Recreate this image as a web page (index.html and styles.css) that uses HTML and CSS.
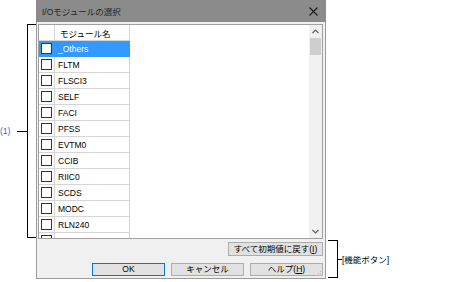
FILE: index.html
```html
<!DOCTYPE html>
<html lang="ja">
  <head>
    <meta charset="UTF-8" />
    <title>I/Oモジュールの選択</title>
    <link rel="stylesheet" href="styles.css">
  </head>
  <body>
    <div class="stage">
      <!-- annotation (1) -->
      <div class="note-left">
        <div class="tag"><span class="tag-text">(1)</span><span class="tag-line"></span></div>
        <div class="brace-left"></div>
      </div>

      <div class="dialog">
        <div class="titlebar">
          <span class="title">I/Oモジュールの選択</span>
          <svg class="close" width="9" height="9" viewBox="0 0 9 9"><path d="M0.5 0.5L8.5 8.5M8.5 0.5L0.5 8.5" stroke="#1a1a1a" stroke-width="1.1" fill="none"/></svg>
        </div>
        <div class="body">
          <div class="listbox">
            <div class="grid">
              <div class="row head"><span class="chk"></span><span class="name">モジュール名</span></div>
              <div class="row selected"><span class="chk"><i class="box"></i></span><span class="name">_Others</span></div>
              <div class="row"><span class="chk"><i class="box"></i></span><span class="name">FLTM</span></div>
              <div class="row"><span class="chk"><i class="box"></i></span><span class="name">FLSCI3</span></div>
              <div class="row"><span class="chk"><i class="box"></i></span><span class="name">SELF</span></div>
              <div class="row"><span class="chk"><i class="box"></i></span><span class="name">FACI</span></div>
              <div class="row"><span class="chk"><i class="box"></i></span><span class="name">PFSS</span></div>
              <div class="row"><span class="chk"><i class="box"></i></span><span class="name">EVTM0</span></div>
              <div class="row"><span class="chk"><i class="box"></i></span><span class="name">CCIB</span></div>
              <div class="row"><span class="chk"><i class="box"></i></span><span class="name">RIIC0</span></div>
              <div class="row"><span class="chk"><i class="box"></i></span><span class="name">SCDS</span></div>
              <div class="row"><span class="chk"><i class="box"></i></span><span class="name">MODC</span></div>
              <div class="row"><span class="chk"><i class="box"></i></span><span class="name">RLN240</span></div>
              <div class="row"><span class="chk"><i class="box"></i></span><span class="name">RLN2400</span></div>
            </div>
            <div class="scrollbar">
              <svg class="arrow" width="13" height="13" viewBox="0 0 13 13"><path d="M3.5 8L6.5 5L9.5 8" stroke="#606060" stroke-width="1.2" fill="none"/></svg>
              <div class="thumb"></div>
              <div class="track"></div>
              <svg class="arrow" width="13" height="13" viewBox="0 0 13 13"><path d="M3.5 5L6.5 8L9.5 5" stroke="#606060" stroke-width="1.2" fill="none"/></svg>
            </div>
          </div>
          <div class="reset-row">
            <button class="btn wide">すべて初期値に戻す(<u>I</u>)</button>
          </div>
          <div class="btn-row">
            <button class="btn default">OK</button>
            <button class="btn">キャンセル</button>
            <button class="btn">ヘルプ(<u>H</u>)</button>
          </div>
          <svg class="grip" width="8" height="8" viewBox="0 0 8 8">
            <rect x="6" y="0" width="1" height="1" fill="#b8b8b8"/>
            <rect x="4" y="2" width="1" height="1" fill="#b8b8b8"/>
            <rect x="6" y="2" width="1" height="1" fill="#b8b8b8"/>
            <rect x="2" y="4" width="1" height="1" fill="#b8b8b8"/>
            <rect x="4" y="4" width="1" height="1" fill="#b8b8b8"/>
            <rect x="6" y="4" width="1" height="1" fill="#b8b8b8"/>
            <rect x="0" y="6" width="1" height="1" fill="#b8b8b8"/>
            <rect x="2" y="6" width="1" height="1" fill="#b8b8b8"/>
            <rect x="4" y="6" width="1" height="1" fill="#b8b8b8"/>
            <rect x="6" y="6" width="1" height="1" fill="#b8b8b8"/>
          </svg>
        </div>
      </div>

      <!-- annotation for function buttons -->
      <div class="note-right">
        <div class="brace-right"></div>
        <div class="tag-line short"></div>
        <span class="note-text">[機能ボタン]</span>
      </div>
    </div>
  </body>
</html>
```

FILE: styles.css
```css
html, body {
  margin: 0;
  padding: 0;
  background: #fff;
}
body {
  width: 474px;
  height: 282px;
  overflow: hidden;
  font-family: "Liberation Sans", "Noto Sans CJK JP", sans-serif;
  font-size: 8.5px;
  color: #000;
}
.stage {
  display: flex;
  align-items: flex-start;
}

/* left annotation */
.note-left {
  width: 36px;
  padding-top: 24px;
  display: flex;
  flex-shrink: 0;
}
.tag {
  width: 27px;
  height: 214px;
  display: flex;
  align-items: center;
}
.tag-text {
  color: #1a6fd0;
  font-size: 8.5px;
  width: 17px;
}
.tag-line {
  flex: 1;
  height: 1px;
  background: #000;
}
.brace-left {
  width: 8px;
  height: 212px;
  border: 1px solid #000;
  border-right: none;
}

/* dialog */
.dialog {
  width: 290px;
  height: 279px;
  flex-shrink: 0;
  display: flex;
  flex-direction: column;
  box-sizing: border-box;
  border: 1px solid #9a9a9a;
  border-top: none;
  background: #f0f0f0;
}
.titlebar {
  height: 22px;
  background: #8b8b8b;
  display: flex;
  align-items: center;
  justify-content: space-between;
  padding: 0 8px 0 6px;
  margin: 0 -1px;
}
.title {
  color: #262626;
  font-size: 8.5px;
}
.close {
  display: block;
}
.body {
  flex: 1;
  position: relative;
  padding: 2px 2px 0 1px;
  display: flex;
  flex-direction: column;
}
.listbox {
  height: 215px;
  box-sizing: border-box;
  border: 1px solid #a0a0a0;
  background: #fff;
  display: flex;
  overflow: hidden;
}
.grid {
  flex: 1;
}
.row {
  display: flex;
  height: 16px;
}
.row .chk {
  width: 16px;
  box-sizing: border-box;
  border-right: 1px solid #d5d5d5;
  border-bottom: 1px solid #d5d5d5;
  display: flex;
  align-items: center;
  justify-content: center;
}
.row .name {
  width: 75px;
  box-sizing: border-box;
  border-right: 1px solid #d5d5d5;
  border-bottom: 1px solid #d5d5d5;
  padding-left: 3px;
  display: flex;
  align-items: center;
  white-space: nowrap;
}
.row.head .name {
  padding-left: 5px;
}
.row.selected .chk,
.row.selected .name {
  background: #3399ff;
  color: #fff;
  border-color: #3399ff;
}
.box {
  display: block;
  width: 9px;
  height: 9px;
  border: 1px solid #333;
  background: #fff;
}
.scrollbar {
  width: 13px;
  background: #f0f0f0;
  display: flex;
  flex-direction: column;
}
.arrow {
  display: block;
}
.thumb {
  height: 17px;
  margin: 0 1px;
  background: #cdcdcd;
}
.track {
  flex: 1;
}

/* buttons */
.reset-row {
  display: flex;
  justify-content: flex-end;
  padding-top: 3px;
}
.btn-row {
  display: flex;
  justify-content: flex-end;
  gap: 6px;
  padding-top: 7px;
}
.btn {
  height: 13px;
  width: 73px;
  padding: 0;
  margin: 0;
  font-family: "Liberation Sans", "Noto Sans CJK JP", sans-serif;
  font-size: 8.5px;
  line-height: 11px;
  color: #000;
  background: #e1e1e1;
  border: 1px solid #adadad;
}
.btn.wide {
  width: 95px;
  height: 14px;
}
.btn.default {
  border-color: #0078d7;
}
.grip {
  position: absolute;
  right: 1px;
  bottom: 1px;
}

/* right annotation */
.note-right {
  padding-top: 240px;
  display: flex;
  align-items: center;
}
.brace-right {
  width: 9px;
  height: 36px;
  border: 1px solid #000;
  border-left: none;
  margin-left: 2px;
}
.tag-line.short {
  flex: none;
  width: 4px;
}
.note-text {
  font-size: 8.5px;
  white-space: nowrap;
}
```
